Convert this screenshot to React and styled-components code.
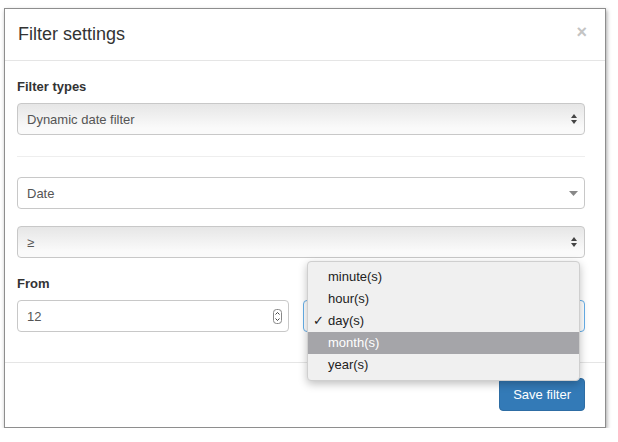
import React from 'react';
import styled, { createGlobalStyle } from 'styled-components';

const Global = createGlobalStyle`
  body { margin: 0; background: #fff; font-family: "Liberation Sans", Arial, sans-serif; color: #333; }
`;

const Page = styled.div`
  padding: 8px 12px 0 4px;
  width: 618px;
  box-sizing: border-box;
`;

const Modal = styled.div`
  position: relative;
  width: 600px;
  border: 1px solid #8e8e8e;
  background: #fff;
  box-shadow: 1px 2px 4px rgba(0, 0, 0, 0.35);
`;

const Header = styled.div`
  display: flex;
  justify-content: space-between;
  align-items: center;
  height: 51px;
  padding: 0 18px 0 13px;
  border-bottom: 1px solid #e5e5e5;
`;

const Title = styled.h4`
  margin: 0;
  font-size: 18px;
  font-weight: normal;
  color: #333;
`;

const Close = styled.span`
  color: #c4c4c4;
  font-size: 18px;
  font-weight: bold;
  margin-top: -4px;
`;

const Body = styled.div`
  padding: 17px 20px 30px 12px;
`;

const Label = styled.div`
  font-size: 13px;
  font-weight: bold;
  height: 17px;
  line-height: 17px;
  margin-bottom: 8px;
  margin-top: ${(p) => p.top || 0}px;
`;

const Select = styled.div`
  display: flex;
  align-items: center;
  justify-content: space-between;
  height: 32px;
  box-sizing: border-box;
  padding: 0 6px 0 9px;
  border: 1px solid ${(p) => (p.focus ? '#66afe9' : '#c8c8c8')};
  border-radius: 4px;
  font-size: 13px;
  color: #555;
  background: ${(p) => (p.flat ? '#fff' : 'linear-gradient(#e6e6e6, #fafafa 80%)')};
  margin-top: ${(p) => p.top || 0}px;
  flex: ${(p) => p.grow || 'none'};
`;

const Divider = styled.div`
  height: 1px;
  background: #eee;
  margin: 21px 0 20px;
`;

const Row = styled.div`
  display: flex;
  gap: 14px;
`;

const Footer = styled.div`
  border-top: 1px solid #e5e5e5;
  display: flex;
  justify-content: flex-end;
  padding: 15px 20px 16px;
`;

const Button = styled.button`
  height: 33px;
  padding: 0 13px;
  background: #337ab7;
  border: 1px solid #2e6da4;
  border-radius: 4px;
  color: #fff;
  font-family: inherit;
  font-size: 13px;
`;

const Menu = styled.div`
  position: absolute;
  left: 302px;
  top: 252px;
  width: 271px;
  padding: 4px 0;
  background: #f0f0f0;
  border: 1px solid #cfcfcf;
  border-radius: 4px;
  box-shadow: 0 3px 8px rgba(0, 0, 0, 0.25);
`;

const Item = styled.div`
  position: relative;
  height: 22px;
  line-height: 22px;
  padding-left: 20px;
  font-size: 13px;
  color: ${(p) => (p.active ? '#fff' : '#222')};
  background: ${(p) => (p.active ? '#a5a5a9' : 'transparent')};
`;

const Check = styled.span`
  position: absolute;
  left: 5px;
`;

const Arrows = () => (
  <svg width="8" height="12" viewBox="0 0 8 12">
    <path d="M4 1 L7 5 H1 Z M4 11 L7 7 H1 Z" fill="#444" />
  </svg>
);

const Caret = () => (
  <svg width="9" height="5" viewBox="0 0 9 5">
    <path d="M0 0 H9 L4.5 5 Z" fill="#888" />
  </svg>
);

const Spin = () => (
  <svg width="9" height="15" viewBox="0 0 9 15">
    <rect x="0.5" y="0.5" width="8" height="14" rx="3" fill="#fff" stroke="#888" />
    <path d="M2.5 5.5 L4.5 3.5 L6.5 5.5 M2.5 9.5 L4.5 11.5 L6.5 9.5" stroke="#444" fill="none" />
  </svg>
);

const units = ['minute(s)', 'hour(s)', 'day(s)', 'month(s)', 'year(s)'];

export default function App() {
  return (
    <Page>
      <Global />
      <Modal>
        <Header>
          <Title>Filter settings</Title>
          <Close>×</Close>
        </Header>
        <Body>
          <Label>Filter types</Label>
          <Select>Dynamic date filter<Arrows /></Select>
          <Divider />
          <Select flat>Date<Caret /></Select>
          <Select top={17}>≥<Arrows /></Select>
          <Label top={17}>From</Label>
          <Row>
            <Select flat grow="0 0 272px">12<Spin /></Select>
            <Select flat focus grow="1"><span /><Arrows /></Select>
          </Row>
        </Body>
        <Footer>
          <Button>Save filter</Button>
        </Footer>
        <Menu>
          {units.map((u) => (
            <Item key={u} active={u === 'month(s)'}>
              {u === 'day(s)' && <Check>✓</Check>}
              {u}
            </Item>
          ))}
        </Menu>
      </Modal>
    </Page>
  );
}
